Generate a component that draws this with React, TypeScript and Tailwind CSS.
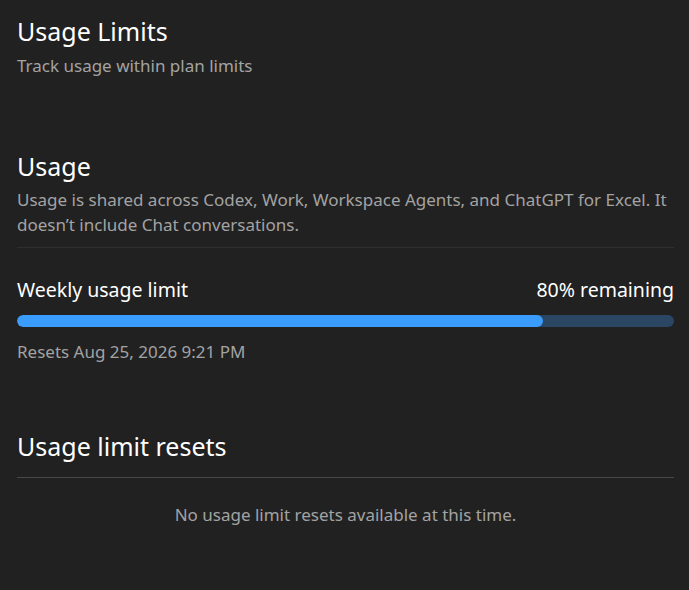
export default function App() {
  const remaining = 80;

  return (
    <div
      className="min-h-[590px] w-full bg-[#212121] text-white pl-[17px] pr-[15px] pt-[14px]"
      style={{ fontFamily: '"Noto Sans", "Open Sans", sans-serif' }}
    >
      {/* Page header */}
      <header>
        <h1 className="text-[25px] leading-[34px] font-normal">Usage Limits</h1>
        <p className="mt-[5px] text-[17px] leading-[26px] text-[#a3a3a3]">Track usage within plan limits</p>
      </header>

      {/* Usage section */}
      <section className="mt-[70px]">
        <h2 className="text-[25px] leading-[34px] font-normal">Usage</h2>
        <p className="mt-[4px] text-[17px] leading-[25px] text-[#a3a3a3]">
          Usage is shared across Codex, Work, Workspace Agents, and ChatGPT for Excel. It doesn’t include Chat
          conversations.
        </p>
        <div className="mt-[10px] border-t border-[#2f2f2f]" />

        <div className="mt-[28px] flex items-center justify-between text-[19.5px] leading-[28px]">
          <span>Weekly usage limit</span>
          <span>{remaining}% remaining</span>
        </div>
        <div className="mt-[11px] h-[12px] w-full rounded-full bg-[#2a4663] overflow-hidden">
          <div className="h-full rounded-full bg-[#3a9cfd]" style={{ width: `${remaining}%` }} />
        </div>
        <p className="mt-[12px] text-[17px] leading-[26px] text-[#a3a3a3]">Resets Aug 25, 2026 9:21 PM</p>
      </section>

      {/* Reset history */}
      <section className="mt-[64px]">
        <h2 className="text-[25px] leading-[34px] font-normal">Usage limit resets</h2>
        <div className="mt-[14px] border-t border-[#474747]" />
        <p className="mt-[24px] text-center text-[17px] leading-[26px] text-[#a3a3a3]">
          No usage limit resets available at this time.
        </p>
      </section>
    </div>
  );
}
